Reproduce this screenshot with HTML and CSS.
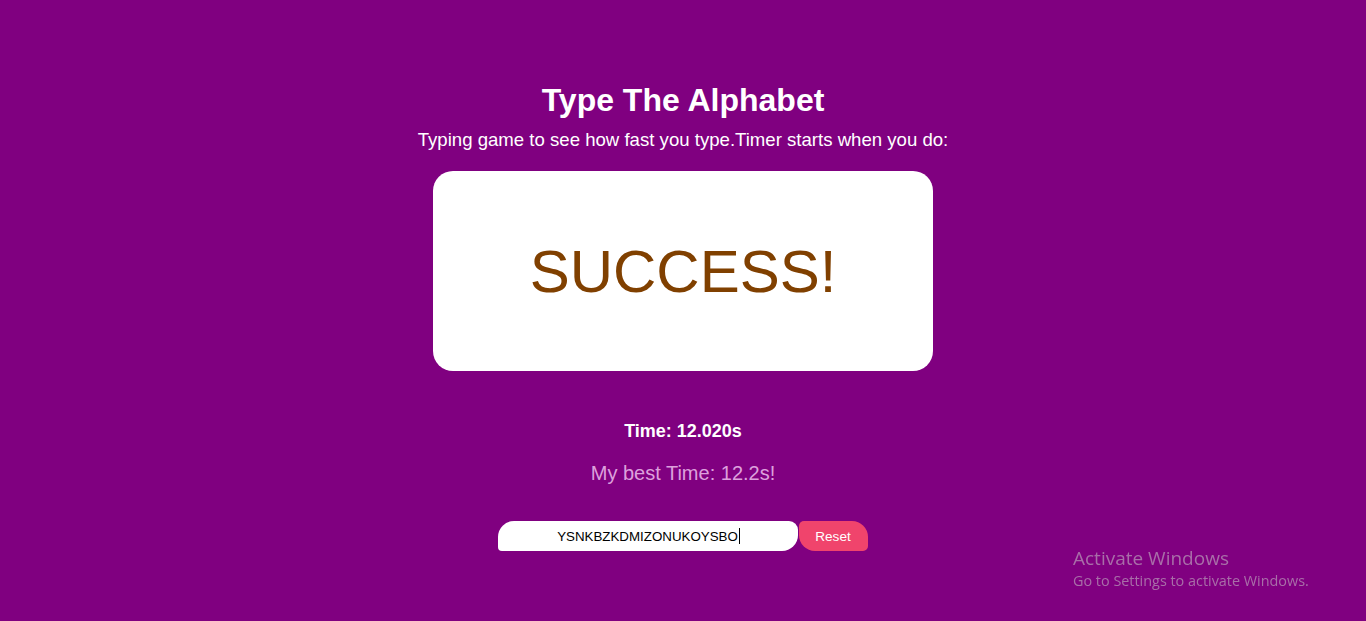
FILE: index.html
```html
<!DOCTYPE html>
<html lang="en">
<head>
<meta charset="utf-8">
<title>Type The Alphabet</title>
<link rel="stylesheet" href="styles.css">
</head>
<body>
<main class="game">
  <h1 class="title">Type The Alphabet</h1>
  <p class="subtitle">Typing game to see how fast you type.Timer starts when you do:</p>
  <div class="board"><span class="board-text">SUCCESS!</span></div>
  <p class="time">Time: 12.020s</p>
  <p class="best">My best Time: 12.2s!</p>
  <div class="controls">
    <div class="entry"><span class="entry-text">YSNKBZKDMIZONUKOYSBO</span><span class="caret"></span></div>
    <button class="reset" type="button">Reset</button>
  </div>
</main>
<div class="watermark">
  <div class="wm-title">Activate Windows</div>
  <div class="wm-sub">Go to Settings to activate Windows.</div>
</div>
</body>
</html>
```
FILE: styles.css
```css
html, body {
  margin: 0;
  padding: 0;
  height: 100%;
}
body {
  background: #800080;
  font-family: "Liberation Sans", Arial, sans-serif;
  color: #fff;
  overflow: hidden;
}
.game {
  display: flex;
  flex-direction: column;
  align-items: center;
  padding-top: 82px;
  text-align: center;
}
.title {
  margin: 0;
  font-size: 32px;
  line-height: 37px;
  font-weight: bold;
}
.subtitle {
  margin: 10px 0 0;
  font-size: 18.6px;
  line-height: 21px;
}
.board {
  margin-top: 21px;
  width: 500px;
  height: 200px;
  background: #fff;
  border-radius: 20px;
  display: flex;
  align-items: center;
  justify-content: center;
}
.board-text {
  font-size: 60px;
  color: #804000;
  line-height: 69px;
}
.time {
  margin: 50px 0 0;
  font-size: 18px;
  line-height: 21px;
  font-weight: bold;
}
.best {
  margin: 20px 0 0;
  font-size: 20px;
  line-height: 23px;
  color: #dda0dd;
}
.controls {
  margin-top: 36px;
  display: flex;
  gap: 1px;
  padding-right: 1px;
}
.entry {
  width: 300px;
  height: 30px;
  background: #fff;
  border-radius: 16px 9px 16px 4px;
  display: flex;
  align-items: center;
  justify-content: center;
  color: #000;
  font-size: 13.33px;
  padding-left: 2px;
  box-sizing: border-box;
}
.caret {
  display: inline-block;
  width: 1px;
  height: 16px;
  background: #000;
  margin-left: 1px;
}
.reset {
  width: 69px;
  height: 30px;
  border: none;
  background: #f0446c;
  color: #fff;
  font-family: "Liberation Sans", Arial, sans-serif;
  font-size: 13.6px;
  border-radius: 5px 16px 5px 16px;
  padding: 0;
}
.watermark {
  position: fixed;
  left: 1073px;
  top: 546px;
  font-family: "Open Sans", "Noto Sans", sans-serif;
  color: #a86ea8;
}
.wm-title {
  font-size: 19px;
  line-height: 24px;
}
.wm-sub {
  font-size: 14.4px;
  line-height: 21px;
}
```
